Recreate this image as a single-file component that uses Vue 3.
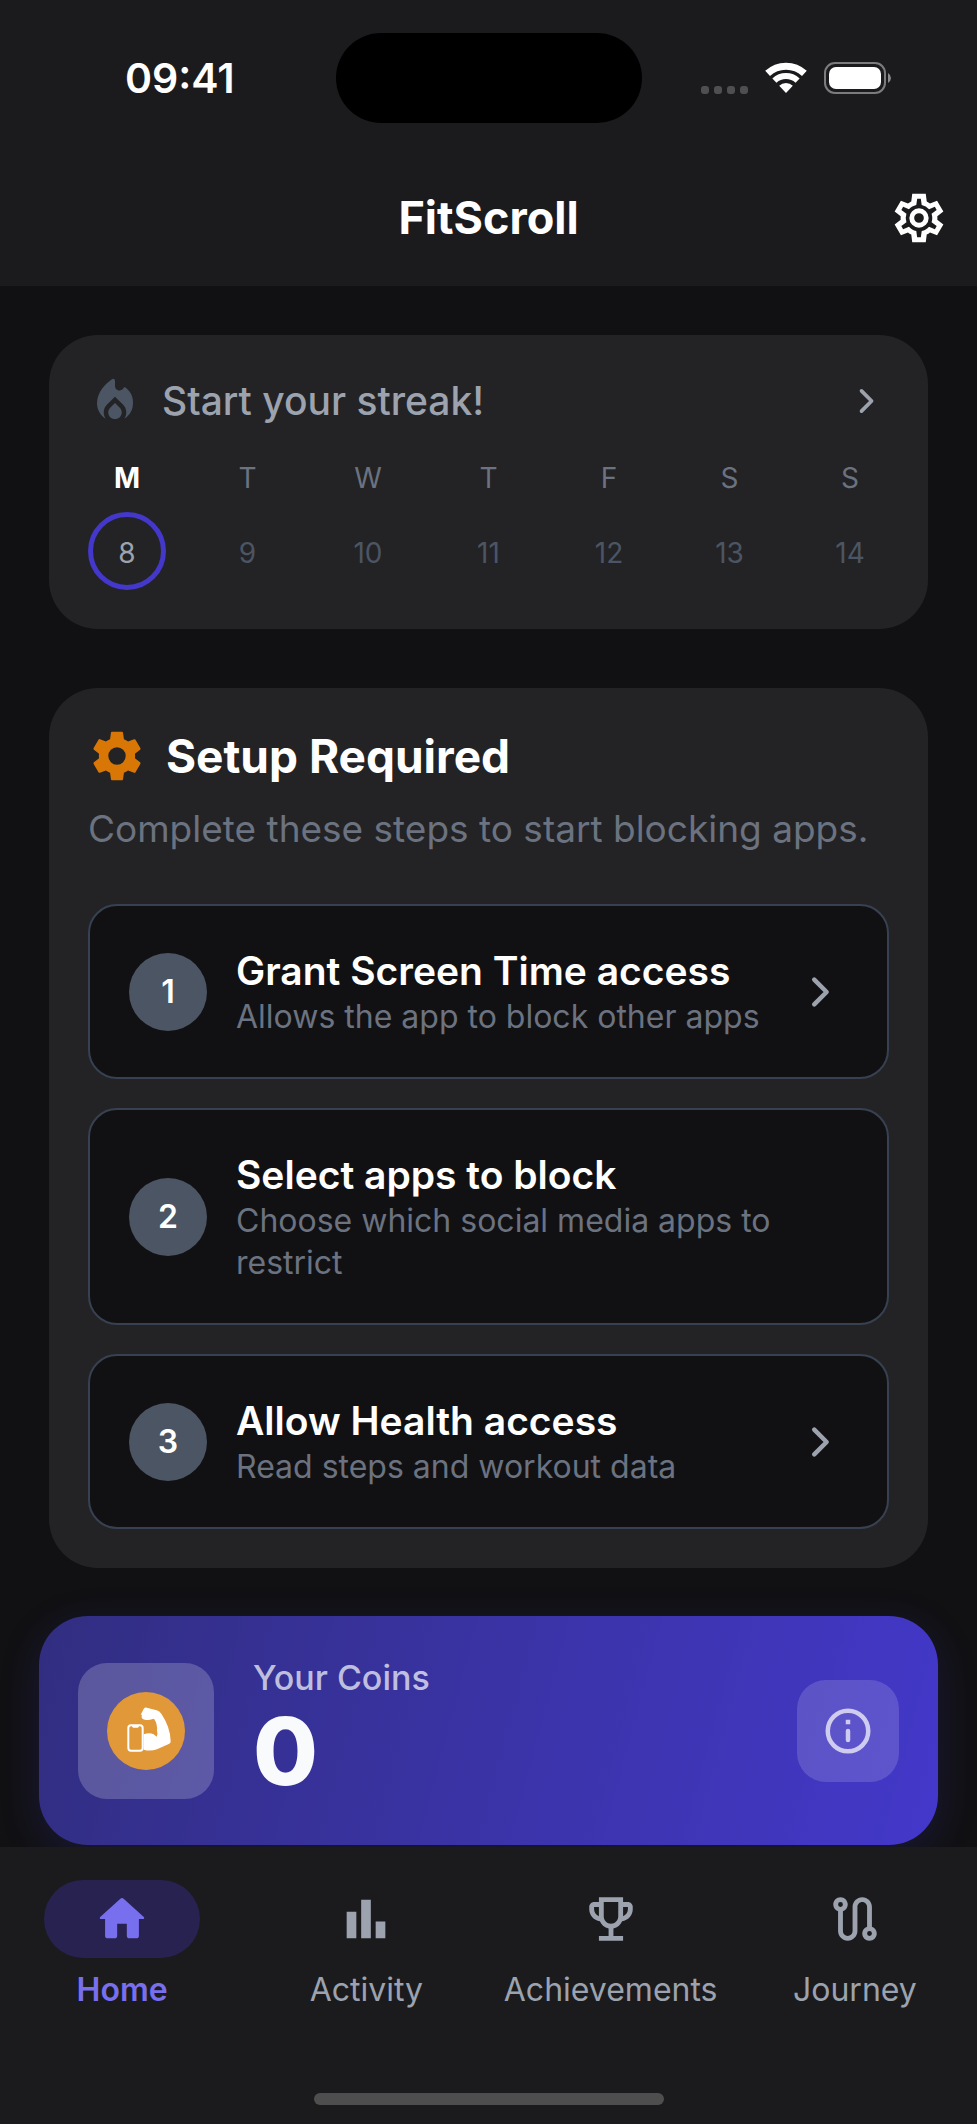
<template>
  <div class="app">
    <header class="app-header">
      <!-- Device status bar -->
      <div class="status-bar">
        <span class="status-time">09:41</span>
        <div class="island"></div>
        <div class="status-icons">
          <div class="signal">
            <span v-for="n in 4" :key="n" class="signal-dot"></span>
          </div>
          <svg class="wifi" viewBox="0 0 42 32">
            <path d="M2.6 11.4A27 27 0 0 1 39.4 11.4" fill="none" stroke="#fff" stroke-width="7" />
            <path d="M9.4 18.6A17 17 0 0 1 32.6 18.6" fill="none" stroke="#fff" stroke-width="6" />
            <path d="M21 31l-6.8-7.3a10 10 0 0 1 13.6 0z" fill="#fff" />
          </svg>
          <svg class="battery" viewBox="0 0 68 32">
            <rect x="1" y="1" width="60" height="30" rx="10" fill="none" stroke="#7c7c7e" stroke-width="2" />
            <rect x="5" y="5" width="52" height="22" rx="7" fill="#fff" />
            <path d="M64 11q3 2 3 5t-3 5z" fill="#8a8a8c" />
          </svg>
        </div>
      </div>

      <div class="title-bar">
        <h1 class="app-title">FitScroll</h1>
        <button class="settings-button" type="button" aria-label="Settings">
          <svg class="icon-lg" viewBox="0 0 24 24"><path :d="icons.cogOutline" fill-rule="evenodd" /></svg>
        </button>
      </div>
    </header>

    <main class="content">
      <!-- Weekly streak -->
      <section class="card streak-card">
        <button class="streak-header" type="button">
          <svg class="icon-md flame" viewBox="0 0 24 24"><path :d="icons.flame" /></svg>
          <span class="streak-title">Start your streak!</span>
          <svg class="icon-sm chevron" viewBox="0 0 24 24"><path :d="icons.chevron" /></svg>
        </button>
        <ul class="week">
          <li v-for="day in week" :key="day.date" class="day" :class="{ today: day.today }">
            <span class="day-letter">{{ day.letter }}</span>
            <span class="day-date">{{ day.date }}</span>
          </li>
        </ul>
      </section>

      <!-- Setup steps -->
      <section class="card setup-card">
        <div class="setup-header">
          <svg class="icon-lg cog" viewBox="0 0 24 24"><path :d="icons.cog" fill-rule="evenodd" /></svg>
          <h2 class="setup-title">Setup Required</h2>
        </div>
        <p class="setup-text">Complete these steps to start blocking apps.</p>
        <div class="steps">
          <button v-for="(step, index) in steps" :key="step.title" class="step" type="button">
            <span class="step-number">{{ index + 1 }}</span>
            <span class="step-body">
              <span class="step-title">{{ step.title }}</span>
              <span class="step-text">{{ step.text }}</span>
            </span>
            <svg v-if="step.available" class="icon-md chevron" viewBox="0 0 24 24"><path :d="icons.chevron" /></svg>
          </button>
        </div>
      </section>

      <!-- Coin balance -->
      <section class="coins-card">
        <div class="coin-box">
          <svg class="coin" viewBox="0 0 234 234">
            <circle cx="117" cy="117" r="117" fill="#e19838" />
            <rect x="64" y="100" width="43" height="76" rx="8" fill="none" stroke="#fff" stroke-width="6" />
            <path d="M74 101h23l-4 6h-15z" fill="#fff" />
            <path
              d="M101 68l9-17q3-5 9-4l30 8q9 3 14 10 27 40 28 82 1 5-4 8l-37 17q-20 7-40 1v-46q18-6 30 0l9 7q4-10 1-18 2-20-9-36-6 1-12 3-14 2-20-1-8-5-4-14z"
              fill="#fff"
            />
          </svg>
        </div>
        <div class="coins-body">
          <span class="coins-label">Your Coins</span>
          <span class="coins-value">{{ coins }}</span>
        </div>
        <button class="info-button" type="button" aria-label="About coins">
          <svg class="icon-md" viewBox="0 0 24 24">
            <circle cx="12" cy="12" r="9" fill="none" stroke="currentColor" stroke-width="2" />
            <path d="M12 12v4" fill="none" stroke="currentColor" stroke-width="2" stroke-linecap="round" />
            <path d="M11 7h2v2h-2z" />
          </svg>
        </button>
      </section>
    </main>

    <nav class="tab-bar">
      <div class="tabs">
        <a v-for="tab in tabs" :key="tab.label" href="#" class="tab" :class="{ active: tab.label === activeTab }" @click.prevent="activeTab = tab.label">
          <span class="tab-icon">
            <svg class="icon-lg" viewBox="0 0 24 24"><path :d="tab.icon" fill-rule="evenodd" /></svg>
          </span>
          <span class="tab-label">{{ tab.label }}</span>
        </a>
      </div>
      <div class="home-indicator"></div>
    </nav>
  </div>
</template>

<script setup>
import { ref } from 'vue'

// 24x24 icon paths
const icons = {
  cog: 'M12 15.6A3.6 3.6 0 0 1 8.4 12 3.6 3.6 0 0 1 12 8.4a3.6 3.6 0 0 1 3.6 3.6 3.6 3.6 0 0 1-3.6 3.6m7.43-2.62c.04-.32.07-.64.07-.98s-.03-.66-.07-.98l2.11-1.65c.19-.15.24-.42.12-.64l-2-3.46c-.12-.22-.39-.3-.61-.22l-2.49 1c-.52-.4-1.08-.73-1.69-.98l-.38-2.65A.49.49 0 0 0 14 2h-4c-.25 0-.46.18-.49.42l-.38 2.65c-.61.25-1.17.59-1.69.98l-2.49-1c-.23-.09-.49 0-.61.22l-2 3.46c-.13.22-.07.49.12.64l2.11 1.65c-.04.32-.07.65-.07.98s.03.66.07.98l-2.11 1.65c-.19.15-.24.42-.12.64l2 3.46c.12.22.39.3.61.22l2.49-1c.52.4 1.08.73 1.69.98l.38 2.65c.03.24.24.42.49.42h4c.25 0 .46-.18.49-.42l.38-2.65c.61-.25 1.17-.59 1.69-.98l2.49 1c.23.09.49 0 .61-.22l2-3.46c.12-.22.07-.49-.12-.64z',
  cogOutline: 'M12 8a4 4 0 1 1 0 8 4 4 0 0 1 0-8m0 2a2 2 0 1 0 0 4 2 2 0 0 0 0-4M9.2 22L8.8 18.86Q8.1 18.52 7.44 17.95L4.52 19.15 1.92 14.65 4.43 12.72Q4.35 12 4.43 11.28L1.92 9.35 4.52 4.85 7.44 6.05Q8.1 5.48 8.8 5.14L9.2 2h5.6l.4 3.14Q15.9 5.48 16.56 6.05L19.48 4.85 22.08 9.35 19.57 11.28Q19.65 12 19.57 12.72L22.08 14.65 19.48 19.15 16.56 17.95Q15.9 18.52 15.2 18.86L14.8 22zM11.25 4l-.37 2.61c-1.2.25-2.26.89-3.03 1.78L5.44 7.35l-.75 1.3L6.8 10.2a5.55 5.55 0 0 0 0 3.6l-2.12 1.56.75 1.3 2.43-1.04c.77.88 1.82 1.52 3.01 1.76l.37 2.62h1.52l.37-2.61c1.19-.25 2.24-.89 3.01-1.77l2.43 1.04.75-1.3-2.12-1.55c.4-1.17.4-2.44 0-3.61l2.11-1.55-.75-1.3-2.41 1.04a5.42 5.42 0 0 0-3.03-1.77L12.75 4z',
  flame: 'M12 12.9l-2.13 2.09C9.31 15.55 9 16.28 9 17.06 9 18.68 10.35 20 12 20s3-1.32 3-2.94c0-.78-.31-1.52-.87-2.07zM16 6l-.44.55C14.38 8.02 12 7.19 12 5.3V3.2c0-1-.8-1.3-1.5-.8C8 4.2 4 7.8 4 13c0 2.92 1.56 5.47 3.89 6.86-.56-.79-.89-1.76-.89-2.8 0-1.32.52-2.56 1.47-3.5L12 10.1l3.53 3.47c.95.93 1.47 2.17 1.47 3.5 0 1.02-.31 1.96-.85 2.75 1.89-1.15 3.29-3.06 3.71-5.3.66-3.55-.6-6.3-2.8-8.2-.4-.35-.8-.6-1.06-.32z',
  chevron: 'M9 6.5l5.5 5.5L9 17.5',
  home: 'M10 19v-5h4v5c0 .55.45 1 1 1h3c.55 0 1-.45 1-1v-7h1.7c.46 0 .68-.57.33-.87L12.67 3.6c-.38-.34-.96-.34-1.34 0l-8.36 7.53c-.34.3-.13.87.33.87H5v7c0 .55.45 1 1 1h3c.55 0 1-.45 1-1z',
  chart: 'M4 9h4v11H4zM10 4h4v16h-4zM16 13h4v7h-4z',
  trophy: 'M19 5h-2V3H7v2H5c-1.1 0-2 .9-2 2v1c0 2.55 1.92 4.63 4.39 4.94.63 1.5 1.98 2.63 3.61 2.96V19H7v2h10v-2h-4v-3.1c1.63-.33 2.98-1.46 3.61-2.96C19.08 12.63 21 10.55 21 8V7c0-1.1-.9-2-2-2zM5 8V7h2v3.82C5.84 10.4 5 9.3 5 8zm7 6c-1.65 0-3-1.35-3-3V5h6v6c0 1.65-1.35 3-3 3zm7-6c0 1.3-.84 2.4-2 2.82V7h2z',
  route: 'M19 15.18V7c0-2.21-1.79-4-4-4s-4 1.79-4 4v10c0 1.1-.9 2-2 2s-2-.9-2-2V8.82C8.16 8.4 9 7.3 9 6c0-1.66-1.34-3-3-3S3 4.34 3 6c0 1.3.84 2.4 2 2.82V17c0 2.21 1.79 4 4 4s4-1.79 4-4V7c0-1.1.9-2 2-2s2 .9 2 2v8.18c-1.16.41-2 1.51-2 2.82 0 1.66 1.34 3 3 3s3-1.34 3-3c0-1.3-.84-2.4-2-2.82zM6 7a1 1 0 1 1 0-2 1 1 0 0 1 0 2zm12 12a1 1 0 1 1 0-2 1 1 0 0 1 0 2z'
}

const week = [
  { letter: 'M', date: 8, today: true },
  { letter: 'T', date: 9 },
  { letter: 'W', date: 10 },
  { letter: 'T', date: 11 },
  { letter: 'F', date: 12 },
  { letter: 'S', date: 13 },
  { letter: 'S', date: 14 }
]

const steps = [
  { title: 'Grant Screen Time access', text: 'Allows the app to block other apps', available: true },
  { title: 'Select apps to block', text: 'Choose which social media apps to restrict', available: false },
  { title: 'Allow Health access', text: 'Read steps and workout data', available: true }
]

const tabs = [
  { label: 'Home', icon: icons.home },
  { label: 'Activity', icon: icons.chart },
  { label: 'Achievements', icon: icons.trophy },
  { label: 'Journey', icon: icons.route }
]

const coins = ref(0)
const activeTab = ref('Home')
</script>

<style>
body {
  background: #111113;
}
</style>

<style scoped>
.app {
  display: flex;
  flex-direction: column;
  min-height: 100vh;
  background: #111113;
  color: #fff;
  font-family: Inter, "Open Sans", sans-serif;
}

h1,
h2,
p,
ul {
  margin: 0;
  padding: 0;
}

button {
  padding: 0;
  border: 0;
  background: none;
  color: inherit;
  font: inherit;
  text-align: left;
  cursor: pointer;
}

svg {
  display: block;
  flex: none;
  fill: currentColor;
}

.icon-sm {
  width: 44px;
  height: 44px;
}

.icon-md {
  width: 54px;
  height: 54px;
}

.icon-lg {
  width: 58px;
  height: 58px;
}

.chevron {
  fill: none;
  stroke: #9ca3af;
  stroke-width: 2;
  stroke-linecap: round;
  stroke-linejoin: round;
}

/* Header */
.app-header {
  background: #1b1b1d;
}

.status-bar {
  display: grid;
  grid-template-columns: 1fr 306px 1fr;
  align-items: center;
  padding-top: 33px;
}

.status-time {
  padding-left: 24px;
  text-align: center;
  font-size: 41px;
  line-height: 50px;
  font-weight: 600;
}

.island {
  height: 90px;
  border-radius: 45px;
  background: #000;
}

.status-icons {
  display: flex;
  align-items: center;
  justify-content: center;
  gap: 17px;
  padding-right: 26px;
}

.signal {
  display: flex;
  align-self: flex-end;
  gap: 5px;
}

.signal-dot {
  width: 8px;
  height: 8px;
  border-radius: 3px;
  background: #4f4f51;
}

.wifi {
  width: 42px;
  height: 32px;
}

.battery {
  width: 68px;
  height: 32px;
}

.title-bar {
  display: grid;
  grid-template-columns: 1fr auto 1fr;
  align-items: center;
  padding: 66px 29px 39px;
}

.app-title {
  grid-column: 2;
  font-size: 45px;
  line-height: 58px;
  font-weight: 700;
}

.settings-button {
  justify-self: end;
}

/* Cards */
.content {
  flex: 1;
  padding: 49px 39px 2px;
}

.card {
  margin: 0 10px;
  padding: 39px;
  border-radius: 49px;
  background: #232325;
}

.streak-header {
  display: flex;
  align-items: center;
  width: 100%;
}

.flame {
  color: #4b5563;
}

.streak-title {
  flex: 1;
  padding-left: 20px;
  color: #9ca3af;
  font-size: 39px;
  line-height: 54px;
  font-weight: 500;
}

.week {
  display: flex;
  justify-content: space-between;
  margin-top: 29px;
  list-style: none;
}

.day {
  display: flex;
  flex-direction: column;
  align-items: center;
  gap: 13px;
  width: 78px;
  font-size: 28px;
  line-height: 42px;
}

.day-letter {
  color: #6b7280;
}

.day-date {
  display: flex;
  align-items: center;
  justify-content: center;
  box-sizing: border-box;
  width: 78px;
  height: 78px;
  padding-top: 4px;
  border-radius: 50%;
  color: #4b5563;
}

.today .day-letter {
  color: #fff;
  font-weight: 700;
}

.today .day-date {
  border: 5px solid #4338ca;
  color: #9ca3af;
}

/* Setup */
.setup-card {
  margin-top: 59px;
}

.setup-header {
  display: flex;
  align-items: center;
  gap: 20px;
}

.cog {
  color: #d97706;
}

.setup-title {
  font-size: 46px;
  line-height: 58px;
  font-weight: 700;
}

.setup-text {
  margin: 19px 0 50px;
  color: #6b7280;
  font-size: 37px;
  line-height: 50px;
}

.steps {
  display: flex;
  flex-direction: column;
  gap: 29px;
}

.step {
  display: flex;
  align-items: center;
  padding: 39px;
  border: 2px solid #374151;
  border-radius: 29px;
  background: #111113;
}

.step-number {
  display: flex;
  align-items: center;
  justify-content: center;
  flex: none;
  width: 78px;
  height: 78px;
  border-radius: 50%;
  background: #4b5563;
  font-size: 32px;
  font-weight: 600;
}

.step-body {
  flex: 1;
  display: flex;
  flex-direction: column;
  padding-left: 29px;
}

.step-title {
  font-size: 39px;
  line-height: 51px;
  font-weight: 600;
}

.step-text {
  color: #6b7280;
  font-size: 32px;
  line-height: 42px;
}

/* Coins */
.coins-card {
  display: flex;
  align-items: center;
  gap: 39px;
  margin-top: 48px;
  padding: 38px 39px;
  border-radius: 49px;
  background: linear-gradient(105deg, #312e81, #4338ca);
  box-shadow: 0 10px 40px rgba(67, 56, 202, 0.2);
}

.coin-box {
  display: flex;
  align-items: center;
  justify-content: center;
  width: 136px;
  height: 136px;
  border-radius: 29px;
  background: rgba(255, 255, 255, 0.2);
}

.coin {
  width: 78px;
  height: 78px;
}

.coins-body {
  flex: 1;
  display: flex;
  flex-direction: column;
  padding-bottom: 7px;
}

.coins-label {
  color: rgba(255, 255, 255, 0.7);
  font-size: 34px;
  line-height: 48px;
  font-weight: 500;
}

.coins-value {
  color: #f9fafb;
  font-size: 94px;
  line-height: 98px;
  font-weight: 800;
}

.info-button {
  display: flex;
  align-items: center;
  justify-content: center;
  width: 102px;
  height: 102px;
  border-radius: 29px;
  background: rgba(255, 255, 255, 0.15);
  color: rgba(255, 255, 255, 0.7);
}

/* Bottom navigation */
.tab-bar {
  position: sticky;
  bottom: 0;
  padding: 33px 0 19px;
  background: #1b1b1d;
}

.tabs {
  display: grid;
  grid-template-columns: repeat(4, 1fr);
}

.tab {
  display: flex;
  flex-direction: column;
  align-items: center;
  gap: 11px;
  color: #9ca3af;
  text-decoration: none;
}

.tab-icon {
  display: flex;
  align-items: center;
  justify-content: center;
  width: 156px;
  height: 78px;
  border-radius: 39px;
}

.tab-label {
  font-size: 32px;
  line-height: 42px;
}

.active {
  color: #786fee;
}

.active .tab-icon {
  background: #27224f;
}

.active .tab-label {
  font-weight: 600;
}

.home-indicator {
  width: 350px;
  height: 12px;
  margin: 82px auto 0;
  border-radius: 6px;
  background: #4e4e4f;
}
</style>
